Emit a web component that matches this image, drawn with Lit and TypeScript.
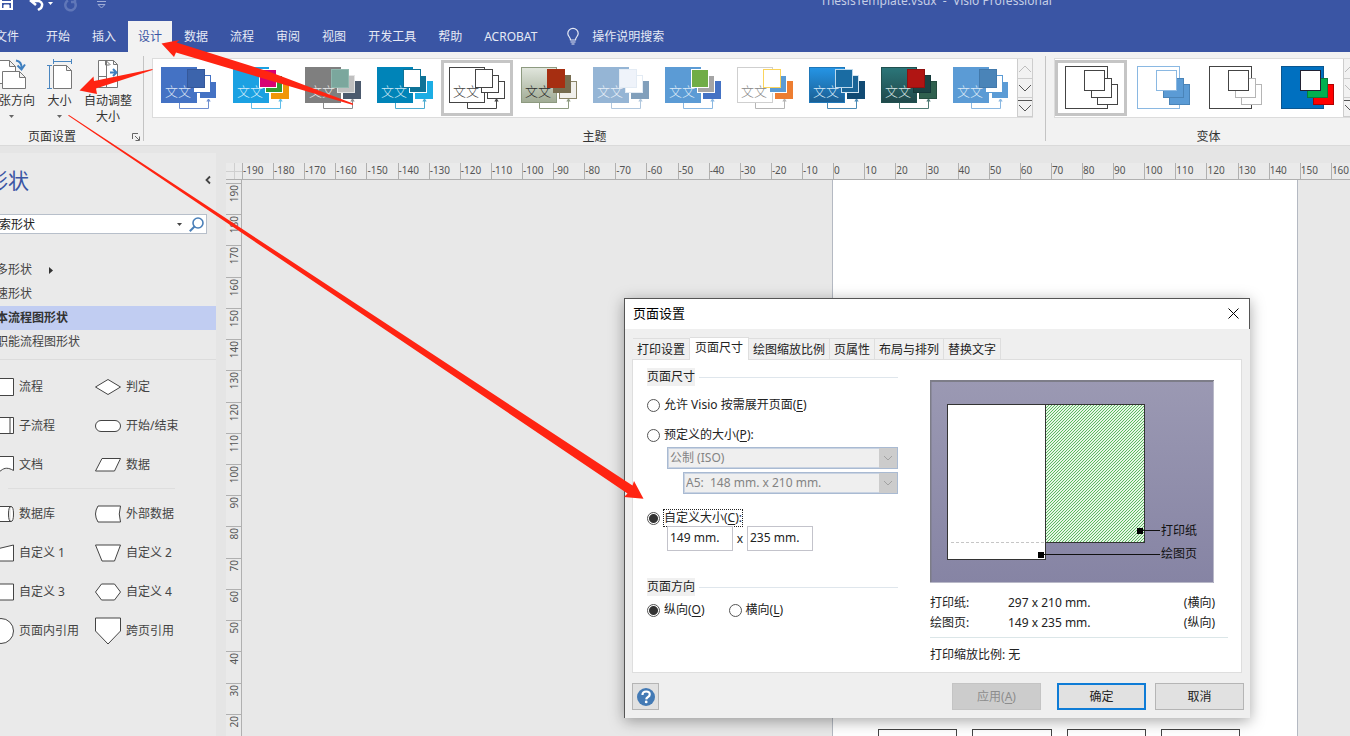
import { LitElement, html, svg, css, nothing } from "lit";
import { customElement, state } from "lit/decorators.js";
import { classMap } from "lit/directives/class-map.js";

interface Theme {
  name: string;
  fill: string;
  line: string;
  text: string;
  link: string;
  boxes: [string, string][];
}

const THEMES: Theme[] = [
  { name: "办公室", fill: "#4472c4", line: "#4472c4", text: "#dbe4f4", link: "#6f8fd0", boxes: [["#4472c4", "#fff"], ["#fff", "#4472c4"], ["#3c64ac", "#35589a"]] },
  { name: "现代", fill: "#1ba1e2", line: "#1ba1e2", text: "#d5eefb", link: "#5fbdea", boxes: [["#f09609", "#f09609"], ["#339933", "#fff"], ["#d80073", "#fff"]] },
  { name: "中性", fill: "#7f7f7f", line: "#7f7f7f", text: "#e8e8e8", link: "#8c8c8c", boxes: [["#4b5a6d", "#4b5a6d"], ["#bfbfbf", "#e4e4e4"], ["#7ba79d", "#8fb8ae"]] },
  { name: "海洋", fill: "#0084b8", line: "#0084b8", text: "#cfe9f4", link: "#4cabd0", boxes: [["#1cade4", "#1cade4"], ["#0f7397", "#fff"], ["#fff", "#0f7397"]] },
  { name: "无主题", fill: "#fff", line: "#444", text: "#444", link: "#444", boxes: [["#fff", "#444"], ["#fff", "#444"], ["#fff", "#444"]] },
  { name: "橄榄", fill: "url(#olive)", line: "#8d9a80", text: "#2b2b2b", link: "#8f9c82", boxes: [["#f1f0ec", "#8a8468"], ["#776d50", "#776d50"], ["#a62e11", "#a62e11"]] },
  { name: "薄雾", fill: "#95b5d5", line: "#95b5d5", text: "#e8f0f8", link: "#b0c7de", boxes: [["#819fbb", "#819fbb"], ["#fff", "#e3ebf4"], ["#eff3fa", "#e3ebf4"]] },
  { name: "丝带", fill: "#5b9bd5", line: "#5b9bd5", text: "#deebf7", link: "#8ab8e2", boxes: [["#4472c4", "#4472c4"], ["#a5a5a5", "#fff"], ["#70ad47", "#fff"]] },
  { name: "轮廓", fill: "#fff", line: "#cfcfcf", text: "#888", link: "#b5b5b5", boxes: [["#ed7d31", "#ed7d31"], ["#5b9bd5", "#fff"], ["#fff", "#fbd45c"]] },
  { name: "深蓝", fill: "url(#azure)", line: "#1f77b8", text: "#d8ebf8", link: "#4a8ab5", boxes: [["#114a73", "#114a73"], ["#1a6496", "#cfe3f1"], ["#1a6ca3", "#bcd9ec"]] },
  { name: "森林", fill: "url(#forest)", line: "#20504f", text: "#d6e5e4", link: "#4e7a74", boxes: [["#30614f", "#264e40"], ["#1b4344", "#15393a"], ["#b01513", "#8f1110"]] },
  { name: "天空", fill: "#5b9bd5", line: "#5b9bd5", text: "#deebf7", link: "#8ab8e2", boxes: [["#5b9bd5", "#fff"], ["#fff", "#5b9bd5"], ["#4a84b8", "#4279ab"]] },
];

const VARIANTS: { name: string; fill: string; line: string; boxes: [string, string][] }[] = [
  { name: "变体 1", fill: "#fff", line: "#444", boxes: [["#fff", "#444"], ["#fff", "#444"], ["#fff", "#444"]] },
  { name: "变体 2", fill: "#fff", line: "#8ab8e2", boxes: [["#5b9bd5", "#4a84b8"], ["#5b9bd5", "#4a84b8"], ["#fff", "#8ab8e2"]] },
  { name: "变体 3", fill: "#fff", line: "#444", boxes: [["#fff", "#b5b5b5"], ["#fff", "#b5b5b5"], ["#fff", "#444"]] },
  { name: "变体 4", fill: "#0070c0", line: "#0a5690", boxes: [["#ff0000", "#b00000"], ["#00b050", "#0a7a3c"], ["#fff", "#223"]] },
];

const TABS = ["开始", "插入", "设计", "数据", "流程", "审阅", "视图", "开发工具", "帮助", "ACROBAT"];

const SHAPES_TOP = [
  ["流程", "M.5 5.5h25v17H.5z"],
  ["判定", "M.5 14 13 6.5 25.5 14 13 21.5z"],
  ["子流程", "M.5 5.5h25v16H.5zM4 5.5v16M22 5.5v16"],
  ["开始/结束", "M6 8.5h14a5.3 5.3 0 0 1 0 11H6a5.3 5.3 0 0 1 0-11z"],
  ["文档", "M.5 5.5h25v14c-5-3-9-3-12.500 0s-8 2-12.500 0z"],
  ["数据", "M7 7.500h18.500l-6 12.500H.5z"],
];

const SHAPES_BOTTOM = [
  ["数据库", "M3 6.500h20q2.500 0 2.500 7.500T23 21.500H3Q.5 21.500.5 14T3 6.500zM23 6.500q-2.500 0-2.500 7.500t2.500 7.500"],
  ["外部数据", "M3 6h22.500q-2.500 8 0 16H3Q-2 14 3 6z"],
  ["自定义 1", "M.5 12 25.500 6v16H.5z"],
  ["自定义 2", "M.5 6h25l-6 16H7z"],
  ["自定义 3", "M.5 6h25v16H.5z"],
  ["自定义 4", "M6.500 6h13l6 8-6 8h-13l-6-8z"],
  ["页面内引用", "M13 1.500a12.500 12.500 0 1 1 0 25a12.500 12.500 0 0 1 0-25z"],
  ["跨页引用", "M.5 1h25v13L13 27 .5 14z"],
];

const chevron = (dir: "up" | "down" | "more") => html`
  <svg width="14" height="18" viewBox="0 0 14 18" fill="none" stroke="currentColor">
    ${dir === "up"
      ? svg`<path d="M1 12 7 6l6 6" />`
      : dir === "down"
        ? svg`<path d="M1 6l6 6 6-6" />`
        : svg`<path d="M0 2.500h14M1 7l6 6 6-6" />`}
  </svg>
`;

@customElement("ribbon-bar")
class RibbonBar extends LitElement {
  static styles = css`
    :host {
      display: block;
      font-size: 12px;
      line-height: 16px;
      color: #333;
    }
    button {
      font: inherit;
      color: inherit;
      border: 0;
      background: none;
      padding: 0;
      margin: 0;
    }
    svg {
      display: block;
      overflow: visible;
    }
    .title-bar {
      display: flex;
      align-items: center;
      height: 41px;
      margin-top: -20px;
      background: #3a55a4;
      color: #c5cee6;
    }
    .quick {
      display: flex;
      align-items: center;
      flex: 0 0 542px;
      gap: 8px;
      padding-left: 20px;
      box-sizing: border-box;
    }
    .doc-title {
      flex: 1;
      text-align: center;
      white-space: pre;
    }
    .tabs {
      display: flex;
      gap: 2px;
      height: 31px;
      background: #3a55a4;
      color: #e6eaf5;
    }
    .tabs button {
      padding: 0 10px;
      white-space: nowrap;
    }
    .tabs .file {
      padding: 0 15px;
    }
    .tabs .active {
      background: #f2f2f2;
      color: #3a55a4;
    }
    .tabs .tell {
      display: flex;
      align-items: center;
      gap: 13px;
      margin-left: 8px;
    }
    .ribbon {
      display: flex;
      height: 93px;
      background: #f2f2f2;
      border-bottom: 1px solid #dadada;
      overflow: hidden;
    }
    .group {
      display: flex;
      flex-direction: column;
      flex: none;
      margin: 4px 0;
      border-right: 1px solid #c4c4c4;
    }
    .group-label {
      display: flex;
      justify-content: center;
      align-items: center;
      margin-top: auto;
      line-height: 8px;
    }
    .setup {
      width: 164px;
      box-sizing: border-box;
    }
    .setup .group-label {
      padding-left: 48px;
      justify-content: space-between;
      padding-right: 3px;
    }
    .tools {
      display: flex;
      padding-left: 5px;
    }
    .tool {
      display: flex;
      flex-direction: column;
      align-items: center;
      width: 52px;
      white-space: nowrap;
    }
    .tool.narrow {
      width: 45px;
    }
    .tool svg.art {
      margin: 2px 0 3px;
    }
    .tool svg.caret {
      margin-top: 6px;
    }
    .gallery {
      display: flex;
      margin: 2px 12px 0 8px;
      height: 58px;
      border: 1px solid #dcdcdc;
      background: #fff;
    }
    .swatch {
      flex: none;
      width: 72px;
      height: 56px;
      margin-top: 1px;
    }
    .swatch.on {
      box-shadow: inset 0 0 0 3px #c5c5c5;
    }
    .swatch text {
      font-size: 13px;
      font-weight: 300;
    }
    .scroll {
      display: grid;
      grid-template-rows: 20px 19px 19px;
      width: 16px;
      margin: 0 -1px 0 0;
      background: #f2f2f2;
      color: #555;
    }
    .scroll button {
      border: 1px solid #cdcdcd;
      border-top-width: 0;
      overflow: hidden;
    }
    .scroll .dim {
      color: #bdbdbd;
    }
  `;

  @state() tab = "设计";

  private theme(t: Theme, i: number) {
    const [back, mid, front] = t.boxes;
    return html`<button class=${classMap({ swatch: true, on: i === 4 })} aria-label=${t.name}>
      <svg width="72" height="56" viewBox="0 0 72 56">
        <defs>
          <linearGradient id="olive" x2="0" y2="1"><stop stop-color="#e1e6dd" /><stop offset="1" stop-color="#a0ab94" /></linearGradient>
          <linearGradient id="azure" x2="0" y2="1"><stop stop-color="#2595e6" /><stop offset="1" stop-color="#1a5e92" /></linearGradient>
          <linearGradient id="forest" x2="0" y2="1"><stop stop-color="#2b7679" /><stop offset="1" stop-color="#20484a" /></linearGradient>
        </defs>
        <path d="M26.500 43v5.500h29V41" fill="none" stroke=${t.link} />
        <path d="M55.500 38l2.200 3.500h-4.400z" fill=${t.link} />
        <rect x="8.500" y="7.500" width="35" height="35" fill=${t.fill} stroke=${t.line} />
        <rect x="46.500" y="21.500" width="17" height="17" fill=${back[0]} stroke=${back[1]} />
        <rect x="40.500" y="15.500" width="17" height="17" fill=${mid[0]} stroke=${mid[1]} />
        <rect x="34.500" y="9.500" width="17" height="18" fill=${front[0]} stroke=${front[1]} />
        <text x="12" y="36" fill=${t.text}>文文</text>
      </svg>
    </button>`;
  }

  render() {
    return html`
      <div class="title-bar">
        <div class="quick">
          <svg width="13" height="16" viewBox="0 0 13 16" fill="none" stroke="#fff" stroke-width="2"><path d="M1 1h11v15H1zM2 9h9" /><path d="M4 16v-4h5v4" fill="#fff" stroke-width="1" /></svg>
          <svg width="34" height="16" viewBox="-6 0 34 16" fill="none" stroke="#fff" stroke-width="2.500"><path d="M4 8h8q5 2 2 7l-3 2M9 3 4 8 9 12" /><path d="M21 9h5l-2.500 3z" fill="#fff" stroke="none" /></svg>
          <svg width="14" height="16" viewBox="0 0 14 16" fill="none" stroke="#6077b8" stroke-width="2.500"><path d="M5 7.500a5.200 5.200 0 1 0 7 2M12 3v6H8" /></svg>
          <svg width="34" height="16" viewBox="-8 0 34 16" fill="none" stroke="#9fadd6"><path d="M4 8.500h9M5 11.500h7l-3.500 3.500z" /></svg>
        </div>
        <div class="doc-title">ThesisTemplate.vsdx  -  Visio Professional</div>
      </div>
      <nav class="tabs">
        <button class="file">文件</button>
        ${TABS.map((t) => html`<button class=${classMap({ active: t === this.tab })} @click=${() => (this.tab = t)}>${t}</button>`)}
        <button class="tell">
          <svg width="12" height="17" viewBox="0 0 12 17" fill="none" stroke="#e6eaf5" stroke-width="1.200">
            <path d="M3.500 12C3.500 9 .8 8.500.8 5.500a5.200 5.200 0 0 1 10.400 0C11.200 8.500 8.500 9 8.500 12zM3.500 14h5M4.500 16h3" />
          </svg>
          操作说明搜索
        </button>
      </nav>
      <div class="ribbon">
        <section class="group setup">
          <div class="tools">
            <button class="tool">
              <svg class="art" width="32" height="32" viewBox="0 0 32 32" fill="#fff" stroke="#777">
                <path d="M-2.500 2.500h17l6 6v17h-23zM14.500 2.500v6h6" />
                <path d="M7.500 13.500h17l6 6v11h-23zM24.500 13.500v6h6" />
                <path d="M21 2.500q6 1 5.500 8M22.500 7.500l4 4 3.500-5" fill="none" stroke="#3f7fbf" stroke-width="2" />
              </svg>
              纸张方向
              <svg class="caret" width="5" height="3"><path d="M0 0h5L2.500 3z" fill="#666" /></svg>
            </button>
            <button class="tool narrow">
              <svg class="art" width="26" height="32" viewBox="0 0 26 32" fill="#fff" stroke="#777">
                <path d="M6.500 7.500h13l5 5v18h-18zM19.500 7.500v5h5" />
                <path d="M6.500 3.500h18M6.500 1v5M24.500 1v5M2.500 7.500v23M0 7.500h5M0 30.500h5" fill="none" stroke="#4a86c0" />
              </svg>
              大小
              <svg class="caret" width="5" height="3"><path d="M0 0h5L2.500 3z" fill="#666" /></svg>
            </button>
            <button class="tool">
              <svg class="art" width="22" height="32" viewBox="0 0 22 32" fill="#fff" stroke="#777">
                <path d="M1.500 2.500h15l4 4v23h-19zM16.500 2.500v4h4" />
                <path d="M8.500 3v4h4M9.500 2.500v27M9.500 3l4 4M1.500 18.500h8" fill="none" />
                <path d="M13 14.500h6M16 11l3.500 3.500-3.500 3.500" fill="none" stroke="#3f7fbf" stroke-width="2" />
              </svg>
              自动调整<br />大小
            </button>
          </div>
          <div class="group-label">
            页面设置
            <svg width="8" height="8" viewBox="0 0 8 8" fill="none" stroke="#666"><path d="M.5 6V.5H6M3 3l4 4M7.500 3.500v4h-4" /></svg>
          </div>
        </section>
        <section class="group">
          <div class="gallery">
            ${THEMES.map((t, i) => this.theme(t, i))}
            <div class="scroll">
              <button class="dim" aria-label="上一行">${chevron("up")}</button>
              <button aria-label="下一行">${chevron("down")}</button>
              <button aria-label="更多主题">${chevron("more")}</button>
            </div>
          </div>
          <div class="group-label">主题</div>
        </section>
        <section class="group">
          <div class="gallery">
            ${VARIANTS.map(
              (v, i) => html`<button class=${classMap({ swatch: true, on: i === 0 })} aria-label=${v.name}>
                <svg width="72" height="56" viewBox="0 0 72 56">
                  <rect x="10.500" y="6.500" width="42" height="42" fill=${v.fill} stroke=${v.line} />
                  <rect x="42.500" y="24.500" width="20" height="20" fill=${v.boxes[0][0]} stroke=${v.boxes[0][1]} />
                  <rect x="36.500" y="18.500" width="20" height="19" fill=${v.boxes[1][0]} stroke=${v.boxes[1][1]} />
                  <rect x="29.500" y="10.500" width="20" height="20" fill=${v.boxes[2][0]} stroke=${v.boxes[2][1]} />
                </svg>
              </button>`,
            )}
            <div class="scroll">
              <button class="dim" aria-label="上一行">${chevron("up")}</button>
              <button class="dim" aria-label="下一行">${chevron("down")}</button>
              <button aria-label="更多变体">${chevron("more")}</button>
            </div>
          </div>
          <div class="group-label">变体</div>
        </section>
      </div>
    `;
  }
}

@customElement("shapes-panel")
class ShapesPanel extends LitElement {
  static styles = css`
    :host {
      display: block;
      font-size: 12px;
      line-height: 24px;
      color: #444;
      background: #eaeaea;
    }
    svg {
      display: block;
      overflow: visible;
      flex: none;
    }
    button {
      font: inherit;
      color: inherit;
      border: 0;
      background: none;
      padding: 0;
    }
    .head {
      display: flex;
      justify-content: space-between;
      align-items: center;
      padding: 11px 5px 0 7px;
    }
    .head h2 {
      margin: 0;
      font-size: 21px;
      line-height: 32px;
      font-weight: 400;
      color: #3a55a4;
    }
    .search {
      display: flex;
      align-items: center;
      height: 18px;
      margin: 18px 9px 0 2px;
      padding: 0 2px 0 4px;
      border: 1px solid #b7bfca;
      background: #fff;
      gap: 7px;
    }
    .search input {
      flex: 1;
      min-width: 0;
      height: 18px;
      padding: 1px 0 0;
      box-sizing: border-box;
      border: 0;
      background: none;
      font: inherit;
      line-height: 16px;
      color: #222;
      outline: 0;
    }
    .search input::placeholder {
      color: #222;
    }
    .stencils {
      list-style: none;
      margin: 0;
      padding: 24px 0 5px;
      border-bottom: 1px solid #dcdcdc;
    }
    .stencils li {
      display: flex;
      align-items: center;
      gap: 17px;
      height: 24px;
      padding-left: 4px;
    }
    .stencils .open {
      font-weight: 700;
      color: #333;
      background: #c1cdf2;
    }
    .shapes {
      display: grid;
      grid-template-columns: 107px 1fr;
      grid-auto-rows: 39px;
      padding-left: 8px;
    }
    .shapes.first {
      padding-top: 7px;
    }
    .shapes button {
      display: flex;
      align-items: center;
      gap: 5px;
      white-space: nowrap;
    }
    .rule {
      margin: 4px 41px 5px 28px;
      border-top: 1px solid #dedede;
    }
  `;

  private grid(items: string[][], cls = "") {
    return html`<div class="shapes ${cls}">
      ${items.map(
        ([name, d]) => html`<button>
          <svg width="26" height="28" viewBox="0 0 26 28"><path d=${d} fill="#fff" stroke="#444" /></svg>
          ${name}
        </button>`,
      )}
    </div>`;
  }

  render() {
    return html`
      <div class="head">
        <h2>形状</h2>
        <button aria-label="折叠"><svg width="6" height="8" viewBox="0 0 6 8" fill="none" stroke="#444" stroke-width="1.800"><path d="M5 .5 1.500 4 5 7.500" /></svg></button>
      </div>
      <div class="search">
        <input aria-label="搜索形状" placeholder="搜索形状" />
        <svg width="5" height="3"><path d="M0 0h5L2.500 3z" fill="#444" /></svg>
        <svg width="15" height="15" viewBox="0 0 15 15" fill="none" stroke="#4a7fb8" stroke-width="1.600"><circle cx="9" cy="6" r="5" /><path d="M5.500 9.500.8 14.200" stroke-width="2" /></svg>
      </div>
      <ul class="stencils">
        <li>更多形状 <svg width="4" height="7"><path d="M0 0v7l4-3.500z" fill="#333" /></svg></li>
        <li>快速形状</li>
        <li class="open">基本流程图形状</li>
        <li>跨职能流程图形状</li>
      </ul>
      ${this.grid(SHAPES_TOP, "first")}
      <div class="rule"></div>
      ${this.grid(SHAPES_BOTTOM)}
    `;
  }
}

@customElement("drawing-area")
class DrawingArea extends LitElement {
  static styles = css`
    :host {
      display: grid;
      grid-template: 17px 1fr / 16px 1fr;
      overflow: hidden;
      font-size: 10px;
      line-height: 14px;
      color: #555;
    }
    .across,
    .down {
      background: #eaeaea;
    }
    .corner {
      border-bottom: 1px solid #b0b0b0;
      background:
        linear-gradient(#cfcfcf, #cfcfcf) 8px 0 / 1px 16px no-repeat,
        linear-gradient(#cfcfcf, #cfcfcf) 0 8px / 16px 1px no-repeat,
        #eaeaea;
    }
    .across {
      display: grid;
      grid-template-columns: repeat(36, 1fr);
      margin: 0 -12px 0 0;
      border-bottom: 1px solid #b0b0b0;
    }
    .across span {
      border-left: 1px solid #b0b0b0;
    }
    .down {
      display: grid;
      grid-template-rows: repeat(18, 1fr);
      padding-top: 3px;
      margin-bottom: -9px;
      border-right: 1px solid #b0b0b0;
      min-height: 0;
    }
    .down span {
      display: flex;
      justify-content: center;
      align-items: flex-start;
      border-top: 1px solid #b0b0b0;
      padding-top: 1px;
      overflow: hidden;
    }
    .down b {
      font-weight: 400;
      writing-mode: vertical-rl;
      transform: rotate(180deg);
    }
    .canvas {
      display: flex;
      padding: 0 52px 0 590px;
      background: #e8e8e8;
      min-width: 0;
    }
    .page {
      flex: 1;
      display: grid;
      grid-template-columns: repeat(4, 1fr);
      align-items: end;
      gap: 15px;
      padding: 0 57px 0 45px;
      background: #fff;
      border: solid #b4b9c2;
      border-width: 0 1px;
    }
    .node {
      height: 6px;
      border: solid #444;
      border-width: 1px 1px 0;
    }
  `;

  render() {
    const across = Array.from({ length: 36 }, (_, i) => i * 10 - 190);
    const down = Array.from({ length: 18 }, (_, i) => 190 - i * 10);
    return html`
      <div class="corner"></div>
      <div class="across">${across.map((n) => html`<span>${n}</span>`)}</div>
      <div class="down">${down.map((n) => html`<span><b>${n}</b></span>`)}</div>
      <div class="canvas">
        <div class="page">${[0, 1, 2, 3].map(() => html`<div class="node"></div>`)}</div>
      </div>
    `;
  }
}

@customElement("page-setup-dialog")
class PageSetupDialog extends LitElement {
  static styles = css`
    :host {
      display: block;
      box-sizing: border-box;
      font-size: 12px;
      line-height: 18px;
      color: #222;
      background: #efefef;
      border-left: 1px solid #555;
      box-shadow: 0 3px 14px rgba(0, 0, 0, 0.35);
    }
    button,
    input,
    select {
      font: inherit;
      color: inherit;
      margin: 0;
      box-sizing: border-box;
    }
    svg {
      display: block;
    }
    u {
      text-underline-offset: 2px;
    }
    .bar {
      display: flex;
      justify-content: space-between;
      align-items: center;
      height: 28px;
      padding: 0 10px 2px 8px;
      background: #fff;
      border: solid #555;
      border-width: 1px 1px 0 0;
      font-size: 13px;
      color: #000;
    }
    .bar button {
      padding: 0;
      border: 0;
      background: none;
    }
    .body {
      padding: 8px 8px 8px 7px;
    }
    .tabs {
      display: flex;
      align-items: flex-end;
      padding-left: 1px;
    }
    .tabs button {
      height: 21px;
      padding: 2px 4px 0;
      border: solid #dedede;
      border-width: 1px 1px 0 0;
      background: #f0f0f0;
      white-space: nowrap;
      line-height: 16px;
    }
    .tabs .on {
      height: 23px;
      padding: 0 5px 3px;
      margin-bottom: -1px;
      background: #fff;
    }
    .sheet {
      display: flex;
      gap: 32px;
      padding: 8px 13px 8px 14px;
      border: 1px solid #dedede;
      background: #fff;
    }
    .options {
      flex: 0 0 251px;
    }
    .legend {
      display: flex;
      align-items: center;
      gap: 4px;
    }
    .legend::after {
      content: "";
      flex: 1;
      border-top: 1px solid #dfe6ec;
    }
    .legend span {
      background: #f0f0f0;
    }
    .legend.second {
      margin-top: 27px;
    }
    .choice {
      display: flex;
      align-items: center;
      gap: 4px;
      margin-top: 10px;
    }
    .choice.low {
      margin-top: 12px;
    }
    .choice.custom {
      margin-top: 16px;
    }
    .custom label {
      outline: 1px dotted #222;
      line-height: 16px;
    }
    input[type="radio"] {
      appearance: none;
      width: 13px;
      height: 13px;
      border: 1px solid #555;
      border-radius: 50%;
      background: #fff;
    }
    input[type="radio"]:checked {
      background: radial-gradient(circle, #333 4px, #fff 5px);
    }
    .pick {
      display: grid;
      grid-template-columns: 1fr 18px;
      height: 22px;
      margin: 3px 0 0 20px;
      border: 1px solid #a9bad2;
      outline: 1px solid #c9d3e2;
      outline-offset: -2px;
      box-sizing: border-box;
    }
    .pick.inner {
      margin-left: 36px;
    }
    .pick select {
      grid-area: 1 / 1 / 2 / 3;
      appearance: none;
      padding: 0 2px;
      border: 0;
      background: #efefef;
      color: #838383;
      opacity: 1;
    }
    .pick svg {
      grid-area: 1 / 2;
      background: #cccccc;
      z-index: 1;
    }
    .sizes {
      display: flex;
      align-items: center;
      gap: 3px;
      padding-left: 20px;
    }
    .sizes input {
      width: 66px;
      height: 25px;
      padding: 0 2px 3px;
      border: 1px solid #c3c3cb;
      background: #fff;
      outline: 0;
    }
    .sizes span {
      width: 8px;
      text-align: center;
    }
    .direction {
      display: flex;
      gap: 24px;
      margin-top: 5px;
    }
    .direction .choice {
      margin: 0;
    }
    .info {
      flex: 1;
      padding-top: 12px;
    }
    .preview text {
      font-size: 12px;
      fill: #111;
    }
    table {
      width: 285px;
      margin-top: 10px;
      border-collapse: collapse;
    }
    th,
    td {
      padding: 0;
      height: 20px;
      text-align: left;
      font-weight: 400;
    }
    th {
      width: 78px;
    }
    td:last-child {
      text-align: right;
    }
    .scale {
      margin: 4px 0 0;
      padding-top: 8px;
      border-top: 1px solid #dbe6e8;
    }
    .footer {
      display: flex;
      align-items: center;
      margin-top: 10px;
    }
    .footer button {
      width: 89px;
      height: 27px;
      padding: 0;
      border: 1px solid #b5b5b5;
      background: #e1e1e1;
    }
    .footer .help {
      display: grid;
      place-items: center;
      width: 27px;
      margin-right: auto;
    }
    .footer .apply {
      color: #8d8d8d;
      border-color: #c4c4c4;
      background: #cccccc;
    }
    .footer .ok {
      margin: 0 9px 0 16px;
      border: 2px solid #0f7cd6;
    }
    .footer .cancel {
      margin-right: -2px;
    }
  `;

  private arrow = html`<svg width="18" height="20" viewBox="0 0 18 20" fill="none" stroke="#a2a2a2"><path d="M5 8l4 4 4-4" /></svg>`;

  render() {
    const tabs = ["打印设置", "页面尺寸", "绘图缩放比例", "页属性", "布局与排列", "替换文字"];
    return html`
      <div class="bar">
        页面设置
        <button aria-label="关闭"><svg width="11" height="11" viewBox="0 0 11 11" stroke="#000"><path d="M.5.5l10 10M10.500.5l-10 10" /></svg></button>
      </div>
      <div class="body">
        <div class="tabs" role="tablist">
          ${tabs.map((t, i) => html`<button role="tab" class=${i === 1 ? "on" : nothing}>${t}</button>`)}
        </div>
        <div class="sheet">
          <div class="options">
            <div class="legend"><span>页面尺寸</span></div>
            <div class="choice"><input type="radio" name="size" id="auto" /><label for="auto">允许 Visio 按需展开页面(<u>E</u>)</label></div>
            <div class="choice low"><input type="radio" name="size" id="preset" /><label for="preset">预定义的大小(<u>P</u>):</label></div>
            <div class="pick"><select disabled aria-label="标准"><option>公制 (ISO)</option></select>${this.arrow}</div>
            <div class="pick inner"><select disabled aria-label="纸张"><option>A5:&nbsp; 148 mm. x 210 mm.</option></select>${this.arrow}</div>
            <div class="choice custom"><input type="radio" name="size" id="custom" checked /><label for="custom">自定义大小(<u>C</u>):</label></div>
            <div class="sizes">
              <input aria-label="宽度" value="149 mm." /><span>x</span><input aria-label="高度" value="235 mm." />
            </div>
            <div class="legend second"><span>页面方向</span></div>
            <div class="direction">
              <div class="choice"><input type="radio" name="dir" id="tall" checked /><label for="tall">纵向(<u>O</u>)</label></div>
              <div class="choice"><input type="radio" name="dir" id="wide" /><label for="wide">横向(<u>L</u>)</label></div>
            </div>
          </div>
          <div class="info">
            <svg class="preview" width="284" height="203" viewBox="0 0 284 203">
              <defs>
                <linearGradient id="wall" x2="0" y2="1"><stop stop-color="#9b99b3" /><stop offset="1" stop-color="#8684a4" /></linearGradient>
                <pattern id="hatch" width="3" height="3" patternUnits="userSpaceOnUse">
                  <rect width="3" height="3" fill="#e6f6e6" />
                  <path d="M-1 1l2-2M0 3l3-3M2 4l2-2" stroke="#5cb860" />
                </pattern>
              </defs>
              <rect width="284" height="203" fill="url(#wall)" />
              <path d="M.5 203V1H284" fill="none" stroke="#7d7d88" stroke-width="2" />
              <path d="M283.500 1v201.500H0" fill="none" stroke="#b9b9c8" />
              <rect x="115.500" y="24.500" width="99" height="138" fill="url(#hatch)" stroke="#333" />
              <rect x="17.500" y="24.500" width="98" height="155" fill="#fff" stroke="#333" />
              <path d="M21 162.500h94" stroke="#c6c6c6" stroke-dasharray="3 2" />
              <path d="M210 150.500h20M111 174.500h119" stroke="#111" />
              <path d="M207 148h6v6h-6zM108 172h6v6h-6z" fill="#000" />
              <text x="231" y="155">打印纸</text>
              <text x="231" y="178">绘图页</text>
            </svg>
            <table>
              <tr><th>打印纸:</th><td>297 x 210 mm.</td><td>(横向)</td></tr>
              <tr><th>绘图页:</th><td>149 x 235 mm.</td><td>(纵向)</td></tr>
            </table>
            <p class="scale">打印缩放比例: 无</p>
          </div>
        </div>
        <div class="footer">
          <button class="help" aria-label="帮助">
            <svg width="18" height="18" viewBox="0 0 18 18"><circle cx="9" cy="9" r="9" fill="#437ab5" /><path d="M5.500 7q0-3.500 3.700-3.500T12.700 6.500Q12.700 8 11 9T9.200 11.300" fill="none" stroke="#fff" stroke-width="2.200" /><circle cx="9.200" cy="13.900" r="1.400" fill="#fff" /></svg>
          </button>
          <button class="apply" disabled>应用(<u>A</u>)</button>
          <button class="ok">确定</button>
          <button class="cancel">取消</button>
        </div>
      </div>
    `;
  }
}

@customElement("app-root")
class AppRoot extends LitElement {
  static styles = css`
    :host {
      display: block;
      position: relative;
      height: 100vh;
      overflow: hidden;
      background: #e5e5e5;
      font-family: "Noto Sans", "Noto Sans CJK SC", sans-serif;
    }
    .window {
      display: flex;
      flex-direction: column;
      height: 100%;
      margin-left: -20px;
    }
    .work {
      flex: 1;
      display: grid;
      grid-template-columns: 236px 1fr;
      gap: 10px;
      min-height: 0;
    }
    .shapes {
      margin-top: 7px;
    }
    .drawing {
      margin-top: 17px;
      min-width: 0;
      min-height: 0;
    }
    .dialog {
      position: absolute;
      left: 624px;
      top: 298px;
      width: 626px;
    }
    .notes {
      position: absolute;
      left: 0;
      top: 0;
      fill: #ff2412;
      pointer-events: none;
    }
  `;

  render() {
    return html`
      <div class="window">
        <ribbon-bar></ribbon-bar>
        <div class="work">
          <shapes-panel class="shapes"></shapes-panel>
          <drawing-area class="drawing"></drawing-area>
        </div>
      </div>
      <page-setup-dialog class="dialog"></page-setup-dialog>
      <svg class="notes" width="660" height="510" viewBox="0 0 660 510">
        <path d="M161.500 43.500 179.500 40 176.500 42.500 270 72 353 103.500V105L265 79 176 52.500 174 57z" />
        <path d="M79.500 90.500 93.500 76.500 94 81 152.500 69v1L96 88.500 97 94z" />
        <path d="M68 115.500 69 115 632.500 485.500 634 481 643.500 498.700 624 497 627.500 493.500z" />
      </svg>
    `;
  }
}
